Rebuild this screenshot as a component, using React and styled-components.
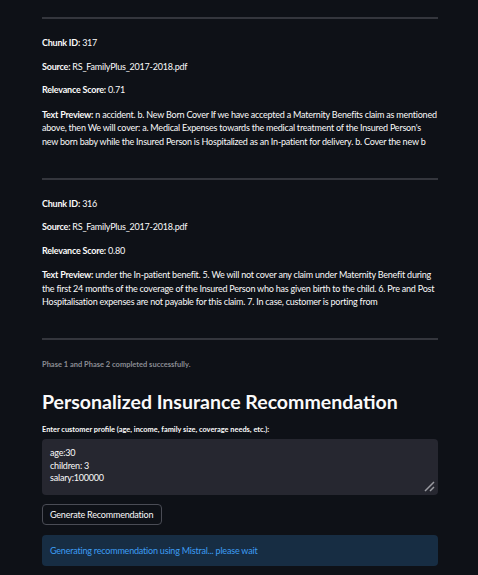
import React from "react";
import styled, { createGlobalStyle } from "styled-components";

const Global = createGlobalStyle`
  body {
    margin: 0;
    background: #0e1117;
    font-family: Lato, "Noto Sans", sans-serif;
    color: #fafafa;
  }
`;

const Main = styled.div`
  width: 478px;
  height: 575px;
  overflow: hidden;
  box-sizing: border-box;
  padding: 17px 40px 0 42px;
  background: #0e1117;
`;

const Rule = styled.hr`
  margin: 0;
  border: none;
  height: 2px;
  background: #34363d;
`;

const Chunk = styled.div`
  padding: 18px 0 29.5px;
`;

const Line = styled.p`
  margin: 0 0 11.5px;
  font-size: 9px;
  letter-spacing: -0.22px;
  line-height: 12px;
  color: #fafafa;
  b {
    font-weight: 700;
  }
`;

const Preview = styled(Line)`
  line-height: 13.5px;
  margin: 0;
`;

const Status = styled.div`
  margin: 20px 0 0;
  font-size: 7.5px;
  line-height: 10px;
  font-weight: 700;
  color: #8b8d94;
`;

const Title = styled.h1`
  margin: 17px 0 0;
  font-size: 19.5px;
  line-height: 30px;
  font-weight: 700;
  color: #fafafa;
`;

const Label = styled.label`
  display: block;
  margin: 8px 0 4px;
  font-size: 7.4px;
  line-height: 10px;
  font-weight: 700;
  color: #fafafa;
`;

const AreaWrap = styled.div`
  position: relative;
  height: 56px;
  border-radius: 4px;
  background: #262730;
  box-sizing: border-box;
  padding: 8px 8px;
  font-size: 9px;
  letter-spacing: -0.2px;
  line-height: 12.5px;
  color: #fafafa;
`;

const Grip = styled.svg`
  position: absolute;
  right: 3px;
  bottom: 3px;
`;

const Button = styled.button`
  margin-top: 9px;
  display: block;
  height: 21px;
  width: 120px;
  padding: 0 7px;
  text-align: left;
  border-radius: 4px;
  border: 1px solid #4a4c55;
  background: #0e1117;
  color: #fafafa;
  font-family: inherit;
  font-size: 9px;
  letter-spacing: -0.2px;
`;

const Info = styled.div`
  margin-top: 10px;
  height: 31px;
  display: flex;
  align-items: center;
  padding: 0 8px;
  border-radius: 4px;
  background: #172d43;
  color: #3d9df3;
  font-size: 9px;
  letter-spacing: -0.2px;
`;

const chunks = [
  {
    id: 317,
    score: "0.71",
    lines: [
      "n accident. b. New Born Cover If we have accepted a Maternity Benefits claim as mentioned",
      "above, then We will cover: a. Medical Expenses towards the medical treatment of the Insured Person's",
      "new born baby while the Insured Person is Hospitalized as an In-patient for delivery. b. Cover the new b",
    ],
  },
  {
    id: 316,
    score: "0.80",
    lines: [
      "under the In-patient benefit. 5. We will not cover any claim under Maternity Benefit during",
      "the first 24 months of the coverage of the Insured Person who has given birth to the child. 6. Pre and Post",
      "Hospitalisation expenses are not payable for this claim. 7. In case, customer is porting from",
    ],
  },
];

export default function App() {
  return (
    <Main>
      <Global />
      {chunks.map((c) => (
        <React.Fragment key={c.id}>
          <Rule />
          <Chunk>
            <Line>
              <b>Chunk ID:</b> {c.id}
            </Line>
            <Line>
              <b>Source:</b> RS_FamilyPlus_2017-2018.pdf
            </Line>
            <Line>
              <b>Relevance Score:</b> {c.score}
            </Line>
            <Preview>
              <b>Text Preview:</b>{" "}
              {c.lines.map((l, i) => (
                <React.Fragment key={i}>
                  {i > 0 && <br />}
                  {l}
                </React.Fragment>
              ))}
            </Preview>
          </Chunk>
        </React.Fragment>
      ))}
      <Rule />
      <Status>Phase 1 and Phase 2 completed successfully.</Status>
      <Title>Personalized Insurance Recommendation</Title>
      <Label>Enter customer profile (age, income, family size, coverage needs, etc.):</Label>
      <AreaWrap>
        age:30
        <br />
        children: 3
        <br />
        salary:100000
        <Grip width="12" height="12" viewBox="0 0 12 12">
          <path d="M2 11 L11 2 M7 11 L11 7" stroke="#9a9ba1" strokeWidth="1.5" />
        </Grip>
      </AreaWrap>
      <Button>Generate Recommendation</Button>
      <Info>Generating recommendation using Mistral... please wait</Info>
    </Main>
  );
}
